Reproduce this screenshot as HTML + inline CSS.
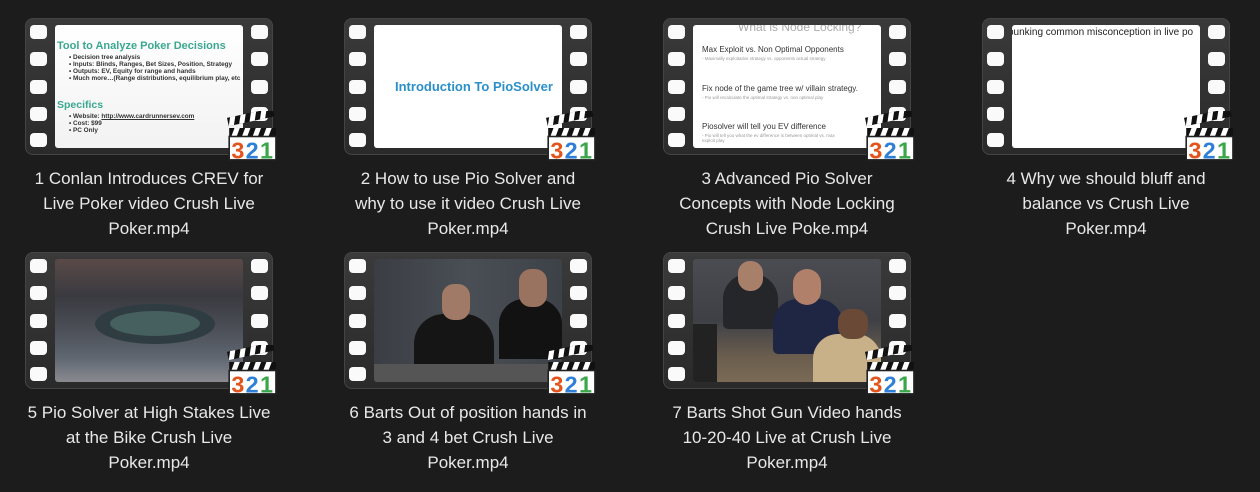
<!DOCTYPE html>
<html><head><meta charset="utf-8"><style>
*{margin:0;padding:0;box-sizing:border-box}
body{width:1260px;height:492px;background:#1c1c1c;overflow:hidden;position:relative;font-family:"Segoe UI","Liberation Sans","DejaVu Sans",sans-serif}
.cell{position:absolute;width:260px}
.film{position:absolute;left:0;top:0;width:248px;height:137px;background:linear-gradient(#3a3a3a,#2a2a2a);border-radius:8px;box-shadow:0 0 0 1px #444 inset}
.h{position:absolute;width:17px;height:14px;background:#fafafa;border-radius:4px}
.img{position:absolute;left:30px;top:7px;width:188px;height:123px;overflow:hidden;border-radius:3px}
.lbl{position:absolute;left:-6px;top:148px;width:260px;text-align:center;color:#e8e8e8;font-size:17px;line-height:25px}
.icon{position:absolute;left:201px;top:93px;width:51px;height:51px}
.slide{background:#fff;color:#333;font-family:"Liberation Sans",sans-serif}
</style></head><body>

<div class="cell" style="left:25px;top:18px">
 <div class="film"></div>
 <div class="img slide" style="background:linear-gradient(#fff,#f2f2f2)">
  <div style="position:absolute;left:2px;top:15px;font-size:11px;font-weight:bold;color:#3aa890;white-space:nowrap">Tool to Analyze Poker Decisions</div>
  <div style="position:absolute;left:14px;top:29px;font-size:6.4px;font-weight:bold;line-height:7px;color:#333;white-space:nowrap">• Decision tree analysis<br>• Inputs: Blinds, Ranges, Bet Sizes, Position, Strategy<br>• Outputs: EV, Equity for range and hands<br>• Much more…(Range distributions, equilibrium play, etc</div>
  <div style="position:absolute;left:2px;top:74px;font-size:10.5px;font-weight:bold;color:#3aa890">Specifics</div>
  <div style="position:absolute;left:14px;top:88px;font-size:6.4px;font-weight:bold;line-height:7px;color:#333;white-space:nowrap">• Website: <u>http://www.cardrunnersev.com</u><br>• Cost: $99<br>• PC Only</div>
 </div>
 <div class="lbl">1 Conlan Introduces CREV for<br>Live Poker video Crush Live<br>Poker.mp4</div>
</div>

<div class="cell" style="left:344px;top:18px">
 <div class="film"></div>
 <div class="img slide"><div style="position:absolute;left:21px;top:54px;font-size:13px;font-weight:bold;color:#2b8fc9;white-space:nowrap">Introduction To PioSolver</div></div>
 <div class="lbl">2 How to use Pio Solver and<br>why to use it video Crush Live<br>Poker.mp4</div>
</div>

<div class="cell" style="left:663px;top:18px">
 <div class="film"></div>
 <div class="img slide">
  <div style="position:absolute;left:45px;top:-5px;font-size:12px;color:#aaa;white-space:nowrap">What is Node Locking?</div>
  <div style="position:absolute;left:9px;top:20px;font-size:8px;color:#333;white-space:nowrap">Max Exploit vs. Non Optimal Opponents</div>
  <div style="position:absolute;left:9px;top:31px;font-size:4.5px;color:#999;white-space:nowrap">- Maximally exploitative strategy vs. opponents actual strategy</div>
  <div style="position:absolute;left:9px;top:59px;font-size:8px;color:#333;white-space:nowrap">Fix node of the game tree w/ villain strategy.</div>
  <div style="position:absolute;left:9px;top:70px;font-size:4.5px;color:#999;white-space:nowrap">- Pio will recalculate the optimal strategy vs. non optimal play</div>
  <div style="position:absolute;left:9px;top:97px;font-size:8px;color:#333;white-space:nowrap">Piosolver will tell you EV difference</div>
  <div style="position:absolute;left:9px;top:108px;font-size:4.5px;color:#999;width:140px;line-height:5px">- Pio will tell you what the ev difference is between optimal vs. max exploit play</div>
 </div>
 <div class="lbl">3 Advanced Pio Solver<br>Concepts with Node Locking<br>Crush Live Poke.mp4</div>
</div>

<div class="cell" style="left:982px;top:18px">
 <div class="film"></div>
 <div class="img slide"><div style="position:absolute;left:-4px;top:2px;font-size:10px;color:#222;white-space:nowrap">bunking common misconception in live po</div></div>
 <div class="lbl">4 Why we should bluff and<br>balance vs Crush Live<br>Poker.mp4</div>
</div>

<div class="cell" style="left:25px;top:252px">
 <div class="film"></div>
 <div class="img" style="background:linear-gradient(#5a4a48 0%,#3a3a40 30%,#4a4d55 55%,#5e6670 80%,#8a8a90 100%)">
  <div style="position:absolute;left:40px;top:45px;width:120px;height:40px;border-radius:50%;background:#2f3d42"></div>
  <div style="position:absolute;left:55px;top:52px;width:90px;height:25px;border-radius:50%;background:#466060"></div>
 </div>
 <div class="lbl">5 Pio Solver at High Stakes Live<br>at the Bike Crush Live<br>Poker.mp4</div>
</div>

<div class="cell" style="left:344px;top:252px">
 <div class="film"></div>
 <div class="img" style="background:linear-gradient(90deg,#3a3e44,#4a4e55 50%,#3d4248)">
  <div style="position:absolute;left:40px;top:55px;width:80px;height:75px;background:#151515;border-radius:30px 30px 0 0"></div>
  <div style="position:absolute;left:68px;top:25px;width:28px;height:36px;background:#a07a66;border-radius:12px"></div>
  <div style="position:absolute;left:125px;top:40px;width:63px;height:60px;background:#121212;border-radius:25px 25px 0 0"></div>
  <div style="position:absolute;left:145px;top:10px;width:28px;height:38px;background:#9a7260;border-radius:12px"></div>
  <div style="position:absolute;left:0;top:105px;width:188px;height:20px;background:#555"></div>
 </div>
 <div class="lbl">6 Barts Out of position hands in<br>3 and 4 bet Crush Live<br>Poker.mp4</div>
</div>

<div class="cell" style="left:663px;top:252px">
 <div class="film"></div>
 <div class="img" style="background:linear-gradient(#4a4c52,#3e4046 50%,#6b5e4e 80%,#7a6a56)">
  <div style="position:absolute;left:30px;top:15px;width:55px;height:55px;background:#24262a;border-radius:25px 25px 5px 5px"></div>
  <div style="position:absolute;left:45px;top:2px;width:25px;height:30px;background:#a8806a;border-radius:12px"></div>
  <div style="position:absolute;left:80px;top:40px;width:70px;height:55px;background:#1e2644;border-radius:25px 25px 5px 5px"></div>
  <div style="position:absolute;left:100px;top:10px;width:28px;height:36px;background:#b0806a;border-radius:14px"></div>
  <div style="position:absolute;left:120px;top:75px;width:68px;height:48px;background:#c8b088;border-radius:25px 25px 0 0"></div>
  <div style="position:absolute;left:145px;top:50px;width:30px;height:30px;background:#6a4a36;border-radius:12px"></div>
  <div style="position:absolute;left:0;top:65px;width:24px;height:58px;background:#222"></div>
 </div>
 <div class="lbl">7 Barts Shot Gun Video hands<br>10-20-40 Live at Crush Live<br>Poker.mp4</div>
</div>

<script>
document.querySelectorAll('.film').forEach(function(f){
 var c=f.parentNode;
 [7,34,62,89,115].forEach(function(t){
  ['5px','226px'].forEach(function(l){var h=document.createElement('div');h.className='h';h.style.left=l;h.style.top=t+'px';c.appendChild(h);});
 });
 var s='<svg class="icon" viewBox="0 0 48 48" xmlns="http://www.w3.org/2000/svg">'+
 '<g transform="rotate(-12 4 16)"><rect x="3" y="6" width="44" height="8" fill="#111"/>'+
 '<path d="M6 6h5l-3 8h-5zM16 6h5l-3 8h-5zM26 6h5l-3 8h-5zM36 6h5l-3 8h-5z" fill="#fff"/></g>'+
 '<rect x="3" y="16" width="44" height="8" fill="#111"/>'+
 '<path d="M8 16h5l-3 8h-5zM18 16h5l-3 8h-5zM28 16h5l-3 8h-5zM38 16h5l-3 8h-5z" fill="#fff"/>'+
 '<rect x="3" y="24" width="44" height="22" fill="#fff" stroke="#222" stroke-width="1.5"/>'+
 '<text x="5" y="44.5" font-family="Liberation Sans,sans-serif" font-weight="bold" font-size="22" fill="#e2541c">3</text>'+
 '<text x="18.5" y="44.5" font-family="Liberation Sans,sans-serif" font-weight="bold" font-size="22" fill="#2f7fd8">2</text>'+
 '<text x="32" y="44.5" font-family="Liberation Sans,sans-serif" font-weight="bold" font-size="22" fill="#3aa64a">1</text></svg>';
 c.insertAdjacentHTML('beforeend',s);
});
</script>
</body></html>
